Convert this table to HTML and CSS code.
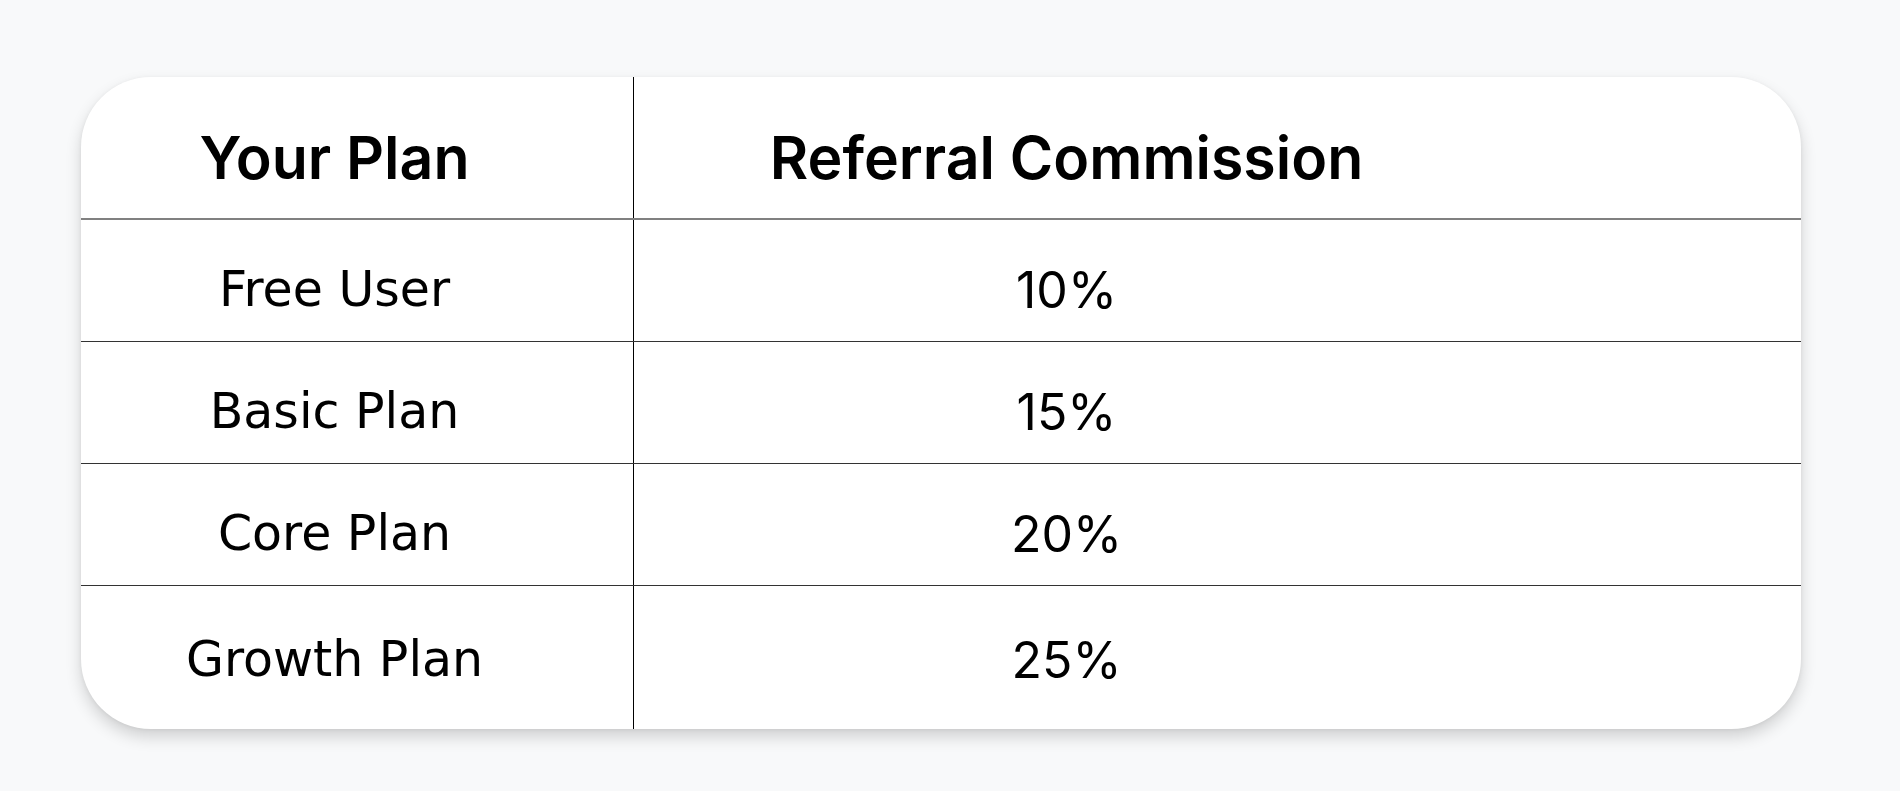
FILE: index.html
```html
<!DOCTYPE html>
<html lang="en">
<head>
<meta charset="utf-8">
<title>Referral Commission</title>
<link rel="stylesheet" href="styles.css">
</head>
<body>
<div class="card">
  <div class="row head">
    <div class="cell c1">Your Plan</div>
    <div class="cell c2">Referral Commission</div>
  </div>
  <div class="row">
    <div class="cell c1">Free User</div>
    <div class="cell c2">10%</div>
  </div>
  <div class="row">
    <div class="cell c1">Basic Plan</div>
    <div class="cell c2">15%</div>
  </div>
  <div class="row">
    <div class="cell c1">Core Plan</div>
    <div class="cell c2">20%</div>
  </div>
  <div class="row last">
    <div class="cell c1">Growth Plan</div>
    <div class="cell c2">25%</div>
  </div>
</div>
</body>
</html>
```

FILE: styles.css
```css
html, body {
  margin: 0;
  padding: 0;
}
body {
  background: #f8f9fa;
  height: 791px;
  overflow: hidden;
  padding-top: 77px;
  padding-left: 81px;
  box-sizing: border-box;
}
.card {
  width: 1720px;
  height: 652px;
  background: #ffffff;
  border-radius: 70px;
  box-shadow: 0 8px 16px rgba(0, 0, 0, 0.16), 0 1px 4px rgba(0, 0, 0, 0.06);
  overflow: hidden;
  display: flex;
  flex-direction: column;
  font-family: "DejaVu Sans", sans-serif;
  color: #000;
}
.row {
  display: grid;
  grid-template-columns: 553px 1167px;
  height: 121px;
  border-bottom: 1px solid #333;
  flex: none;
}
.row.head {
  height: 141px;
  border-bottom: 2px solid #808080;
}
.row.last {
  height: 143px;
  border-bottom: none;
}
.cell {
  display: flex;
  align-items: center;
  justify-content: center;
  padding-top: 18px;
  font-size: 49px;
  line-height: 1;
  box-sizing: border-box;
}
.row.last .cell {
  padding-top: 4px;
}
.c1 {
  border-right: 1px solid #000;
  padding-right: 45px;
}
.c2 {
  padding-right: 302px;
  font-family: "Inter", sans-serif;
  font-size: 50px;
}
.head .cell {
  font-family: "Inter", sans-serif;
  font-weight: 600;
  font-size: 59px;
  padding-top: 20px;
}
```
